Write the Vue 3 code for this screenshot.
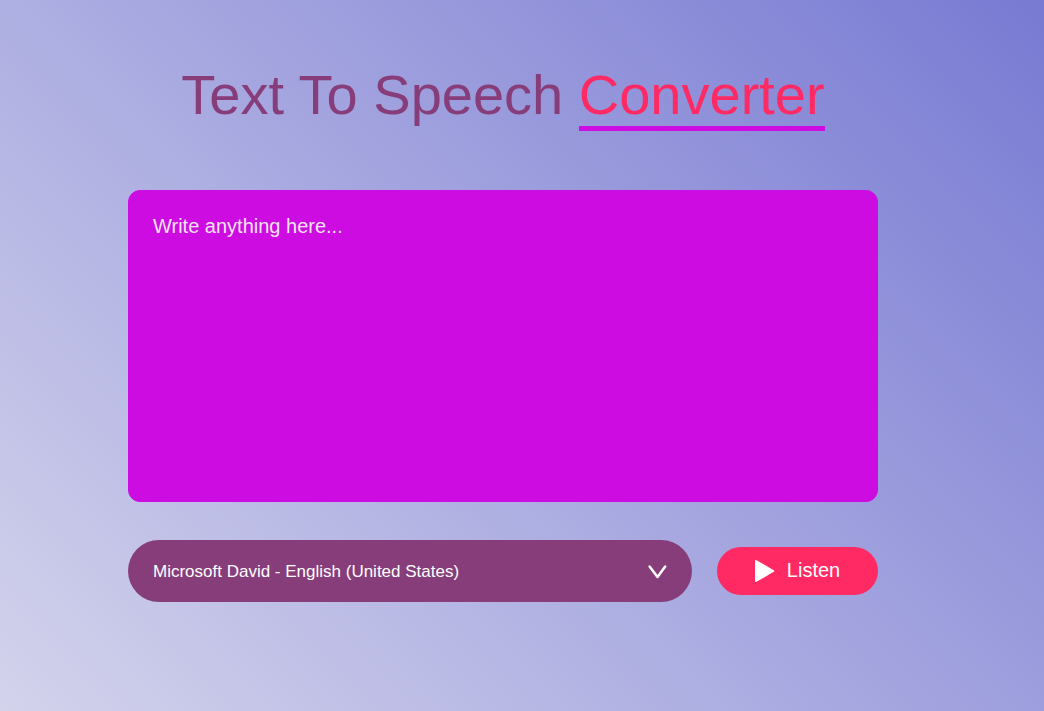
<script setup>
import { ref } from 'vue'

const text = ref('')
const voices = ['Microsoft David - English (United States)']
const voice = ref(voices[0])

function speak() {
  if (!window.speechSynthesis) return
  window.speechSynthesis.speak(new SpeechSynthesisUtterance(text.value))
}
</script>

<template>
  <main class="hero">
    <h1>Text To Speech <span>Converter</span></h1>
    <textarea v-model="text" class="words" placeholder="Write anything here..." aria-label="Text to read aloud"></textarea>
    <div class="row">
      <div class="picker">
        <select v-model="voice" aria-label="Voice">
          <option v-for="v in voices" :key="v">{{ v }}</option>
        </select>
        <svg class="chevron" viewBox="0 0 20 16" aria-hidden="true">
          <path d="M2.6 2.6 L10.5 13 L18.2 2.6" />
        </svg>
      </div>
      <button type="button" @click="speak">
        <svg class="play" viewBox="0 0 20 24" aria-hidden="true">
          <path d="M1 3 L18.2 13 L1 23 Z" />
        </svg>
        Listen
      </button>
    </div>
  </main>
</template>

<style>
body {
  margin: 0;
}
</style>

<style scoped>
.hero {
  box-sizing: border-box;
  min-height: 100vh;
  padding: 64px 166px 60px 128px;
  display: flex;
  flex-direction: column;
  align-items: center;
  background: linear-gradient(45deg, #d3d3ec, #787ad3);
  font-family: "Liberation Sans", Arial, sans-serif;
}

h1 {
  margin: 0 0 59px;
  font-size: 56px;
  line-height: 62px;
  font-weight: 400;
  color: #863d79;
  white-space: nowrap;
}

h1 span {
  display: inline-block;
  color: #ff2963;
  border-bottom: 5px solid #cc0ce0;
}

.words {
  box-sizing: border-box;
  display: block;
  width: 100%;
  height: 312px;
  margin: 0 0 38px;
  padding: 24px;
  border: 1px solid #cc0ce0;
  border-radius: 12px;
  outline: 0;
  resize: none;
  background: #cc0ce0;
  color: #fff;
  font: 20px/23px "Liberation Sans", Arial, sans-serif;
}

.words::placeholder {
  color: #f3e3f1;
  opacity: 1;
}

.row {
  width: 100%;
  display: flex;
  align-items: center;
  gap: 25px;
}

.picker {
  position: relative;
  flex: 1;
}

select {
  display: block;
  box-sizing: border-box;
  width: 100%;
  height: 62px;
  padding: 0 50px 0 25px;
  border: 0;
  border-radius: 31px;
  outline: 0;
  appearance: none;
  background: #863d79;
  color: #fff;
  font: 17px "Liberation Sans", Arial, sans-serif;
}

.chevron {
  position: absolute;
  right: 25px;
  top: 24px;
  width: 20px;
  height: 16px;
  fill: none;
  stroke: #fff;
  stroke-width: 2.5;
  stroke-linecap: round;
  stroke-linejoin: round;
  pointer-events: none;
}

button {
  display: flex;
  align-items: center;
  justify-content: center;
  gap: 12px;
  width: 161px;
  height: 48px;
  padding: 0 0 2px;
  border: 0;
  border-radius: 24px;
  background: #ff2963;
  color: #fff;
  font: 20px "Liberation Sans", Arial, sans-serif;
}

.play {
  width: 20px;
  height: 24px;
  fill: #fff;
  stroke: #fff;
  stroke-width: 2;
  stroke-linejoin: round;
}
</style>
